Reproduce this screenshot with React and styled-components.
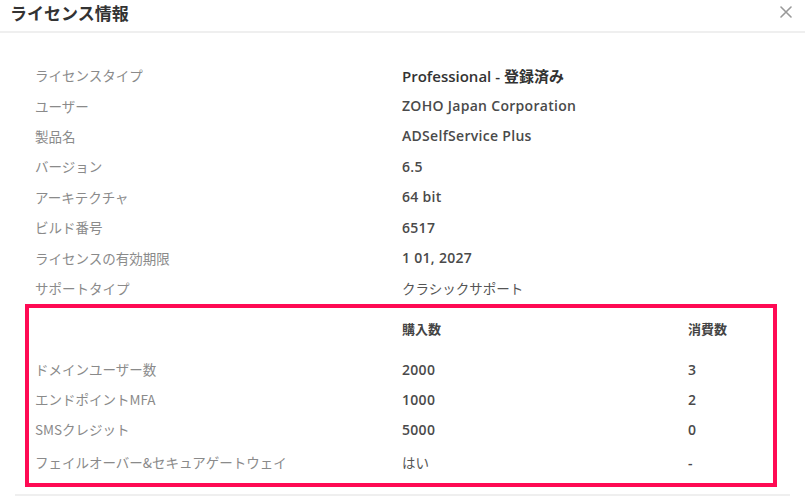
import React from 'react';
import styled, { createGlobalStyle } from 'styled-components';

const GlobalStyle = createGlobalStyle`
  html, body {
    margin: 0;
    padding: 0;
    background: #fff;
  }
  body {
    font-family: 'Open Sans', 'Noto Sans CJK JP', sans-serif;
  }
`;

const info = [
  ['ライセンスタイプ', 'Professional - 登録済み', 'big'],
  ['ユーザー', 'ZOHO Japan Corporation'],
  ['製品名', 'ADSelfService Plus'],
  ['バージョン', '6.5'],
  ['アーキテクチャ', '64 bit'],
  ['ビルド番号', '6517'],
  ['ライセンスの有効期限', '1 01, 2027'],
  ['サポートタイプ', 'クラシックサポート', 'jp'],
];

const usage = [
  ['ドメインユーザー数', '2000', '3'],
  ['エンドポイントMFA', '1000', '2'],
  ['SMSクレジット', '5000', '0'],
  ['フェイルオーバー&セキュアゲートウェイ', 'はい', '-'],
];

const App = () => (
  <Dialog>
    <GlobalStyle />
    <Header>
      <Title>ライセンス情報</Title>
      <Close aria-label="close">
        <svg width="12" height="12" viewBox="0 0 12 12">
          <path d="M1 1 L11 11 M11 1 L1 11" stroke="#999" strokeWidth="1.6" strokeLinecap="round" />
        </svg>
      </Close>
    </Header>
    <Body>
      {info.map(([label, value, kind]) => (
        <InfoRow key={label}>
          <Label>{label}</Label>
          <Value $kind={kind}>{value}</Value>
        </InfoRow>
      ))}
    </Body>
    <UsageBox>
      <UsageRow $h={30} $mb={11}>
        <Label />
        <HeadCell>購入数</HeadCell>
        <HeadCell>消費数</HeadCell>
      </UsageRow>
      {usage.map(([label, bought, used], i) => (
        <UsageRow key={label} $h={30} $mt={i === usage.length - 1 ? 3 : 0}>
          <Label>{label}</Label>
          <Value $kind={bought === 'はい' ? 'jp' : undefined}>{bought}</Value>
          <Value>{used}</Value>
        </UsageRow>
      ))}
    </UsageBox>
    <Footer />
  </Dialog>
);

export default App;

const Dialog = styled.div`
  width: 805px;
  height: 500px;
  overflow: hidden;
  background: #fff;
`;

const Header = styled.div`
  height: 33px;
  box-sizing: border-box;
  padding: 1px 12px 0 10px;
  display: flex;
  justify-content: space-between;
  align-items: flex-start;
  border-bottom: 2px solid #efefef;
`;

const Title = styled.h1`
  margin: 0;
  font-family: 'Noto Sans CJK JP', sans-serif;
  font-size: 17px;
  line-height: 24px;
  font-weight: 700;
  color: #333;
`;

const Close = styled.div`
  width: 14px;
  height: 14px;
  margin-top: 4px;
  display: flex;
  align-items: center;
  justify-content: center;
  cursor: pointer;
`;

const Body = styled.div`
  padding: 27px 0 0 35px;
`;

const InfoRow = styled.div`
  display: grid;
  grid-template-columns: 367px 1fr;
  align-items: center;
  height: 30.4px;
`;

const Label = styled.div`
  font-family: 'Noto Sans CJK JP', sans-serif;
  font-size: 13.5px;
  color: #8a8a8a;
  white-space: nowrap;
`;

const Value = styled.div`
  font-family: ${p => (p.$kind === 'jp' ? "'Noto Sans CJK JP', sans-serif" : "'Open Sans', 'Noto Sans CJK JP', sans-serif")};
  font-size: ${p => (p.$kind === 'big' ? '15px' : p.$kind === 'jp' ? '13.5px' : '14px')};
  font-weight: ${p => (p.$kind === 'jp' ? 400 : 600)};
  letter-spacing: ${p => (p.$kind ? '0' : '0.3px')};
  color: ${p => (p.$kind === 'big' ? '#333' : p.$kind === 'jp' ? '#555' : '#4a4a4a')};
  white-space: nowrap;
`;

const HeadCell = styled.div`
  font-family: 'Noto Sans CJK JP', sans-serif;
  font-size: 13px;
  font-weight: 700;
  color: #444;
`;

const UsageBox = styled.div`
  width: 752px;
  height: 183px;
  box-sizing: border-box;
  margin: 1px 0 0 25px;
  padding: 5px 0 0 6px;
  border: 4px solid #ff0a54;
`;

const UsageRow = styled.div`
  display: grid;
  grid-template-columns: 367px 286px 1fr;
  align-items: center;
  height: ${p => p.$h}px;
  margin-top: ${p => p.$mt || 0}px;
  margin-bottom: ${p => p.$mb || 0}px;
`;

const Footer = styled.div`
  margin: 7px 15px 0;
  border-top: 2px solid #efefef;
`;
